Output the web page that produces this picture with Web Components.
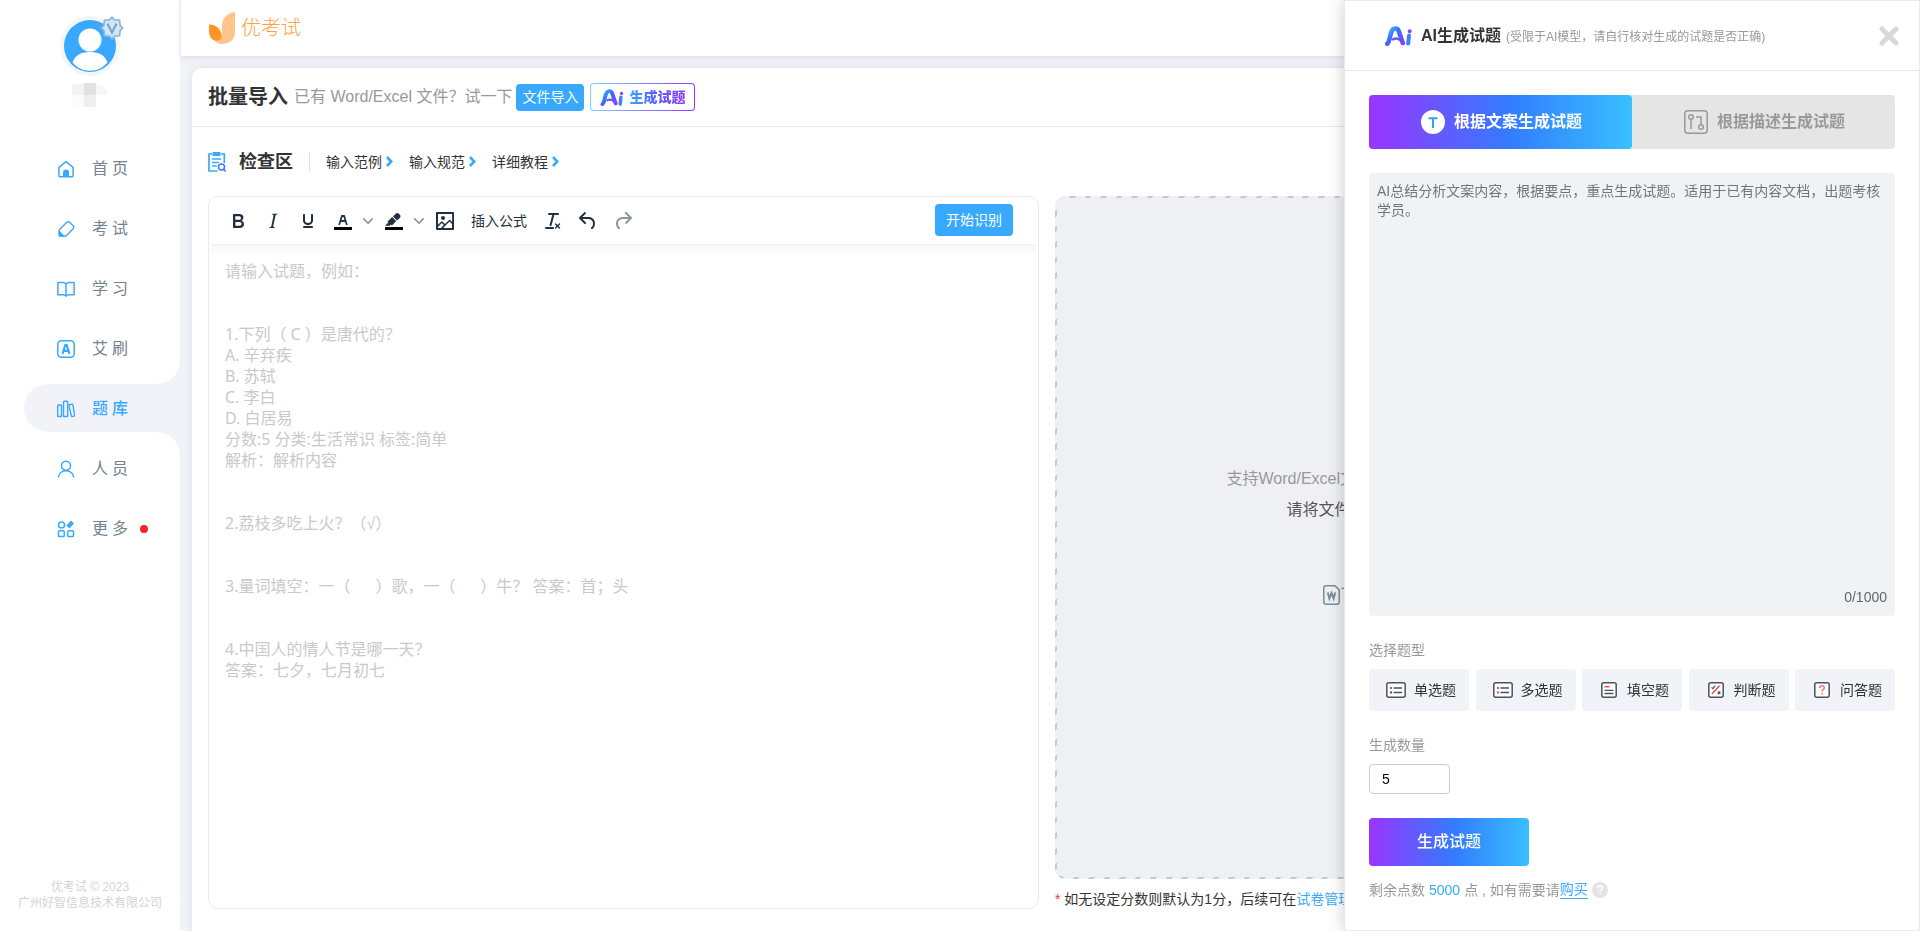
<!DOCTYPE html>
<html lang="zh-CN">
<head>
<meta charset="utf-8">
<title>优考试 - 批量导入</title>
<style>
  html, body { margin: 0; height: 100%; }
  body {
    font: 14px/20px "Liberation Sans", "Noto Sans CJK SC", sans-serif;
    color: #333;
    background: #f2f3f8;
    --blue: #38a9ff;
    --soft: #f2f3f8;
    --ai: linear-gradient(90deg, #9a35ff 0%, #337bff 53%, #38c0ff 100%);
  }
</style>
</head>
<body>
<exam-app></exam-app>

<script>
const BASE = `
  *, *::before, *::after { box-sizing: border-box; }
  button, input, textarea { font: inherit; color: inherit; margin: 0; }
  button { border: 0; background: none; padding: 0; cursor: pointer; }
  a { color: inherit; text-decoration: none; }
  svg { display: block; flex: none; }
  h1, h2, p { margin: 0; }
`;

function define(name, markup, setup) {
  const template = document.createElement('template');
  customElements.define(name, class extends HTMLElement {
    constructor() {
      super();
      template.innerHTML = typeof markup === 'function' ? markup(this) : markup;
      this.attachShadow({ mode: 'open' });
      this.shadowRoot.innerHTML = `<style>${BASE}</style>`;
      this.shadowRoot.append(template.content.cloneNode(true));
      if (setup) setup(this, this.shadowRoot);
    }
  });
}

/* ---------- Icons ---------- */
const NAV_ICONS = {
  home: '<path d="M1.9 7.3 9 1.6l7.1 5.7v8.5a1 1 0 0 1-1 1H2.9a1 1 0 0 1-1-1z" fill="none" stroke="#38a9ff" stroke-width="1.5" stroke-linejoin="round"/><path d="M6 17v-4.500a3 3 0 0 1 6 0V17z" fill="#38a9ff"/>',
  exam: '<rect x="2.500" y="4.500" width="14" height="9" rx="2.400" transform="rotate(-45 9.500 9)" fill="none" stroke="#38a9ff" stroke-width="1.400"/><path d="M1.300 10.500 8.300 17H3.800a2.500 2.500 0 0 1-2.500-2.500z" fill="#38a9ff"/>',
  study: '<path d="M9 4.200c-1-1.300-1.700-1.600-3-1.600H.9v12.200H6c1.300 0 2.200.4 3 1.300.8-.9 1.700-1.300 3-1.300h5.100V2.600H12c-1.300 0-2 .3-3 1.600zM9 4.200v12" fill="none" stroke="#38a9ff" stroke-width="1.500" stroke-linejoin="round"/>',
  app: '<rect x="0.800" y="0.800" width="16.400" height="16.400" rx="3.500" fill="none" stroke="#38a9ff" stroke-width="1.500"/><path d="M5.500 13.800 8.300 5h1.400l2.800 8.800M6.600 10.800h4.800" fill="none" stroke="#38a9ff" stroke-width="2.200"/>',
  bank: '<rect x="0.700" y="5" width="3.800" height="11.500" rx=".8" fill="none" stroke="#38a9ff" stroke-width="1.400"/><rect x="6.500" y="1.300" width="4.200" height="15.200" rx=".8" fill="none" stroke="#38a9ff" stroke-width="1.400"/><path d="m12.300 4.800 2.600-.5a.8.800 0 0 1 1 .7l1.700 10.200a.8.800 0 0 1-.6.900l-1.700.4a.8.800 0 0 1-1-.7L12 5.600z" fill="none" stroke="#38a9ff" stroke-width="1.400"/>',
  people: '<circle cx="9" cy="5.800" r="4.500" fill="none" stroke="#38a9ff" stroke-width="1.500"/><path d="M1.300 17.500C1.700 13.300 5 10.800 9 10.800s7.300 2.500 7.700 6.700" fill="none" stroke="#38a9ff" stroke-width="1.500"/>',
  more: '<g fill="none" stroke="#38a9ff" stroke-width="1.500"><circle cx="4.500" cy="5" r="3"/><rect x="1.500" y="10.800" width="5.800" height="5.800" rx="1.200"/><rect x="10.700" y="10.800" width="5.800" height="5.800" rx="1.200"/></g><path d="m10.900 7 4.600-5" stroke="#38a9ff" stroke-width="4.200" stroke-linecap="butt"/>'
};

const EDIT_ICONS = {
  bold: 'M7.8 19c-.3 0-.5 0-.6-.2l-.2-.5V5.7c0-.2 0-.4.2-.5l.6-.2h5c1.500 0 2.700.3 3.500 1 .7.6 1.100 1.400 1.100 2.500a3 3 0 0 1-.6 1.900c-.4.6-1 1-1.600 1.200.4.1.9.3 1.300.6s.8.7 1 1.200c.4.4.5 1 .5 1.600 0 1.300-.4 2.300-1.300 3-.8.7-2.100 1-3.800 1H7.800Zm5-8.300c.6 0 1.200-.1 1.600-.5.4-.3.6-.7.6-1.300 0-1.100-.8-1.700-2.300-1.700H9.300v3.500h3.400Zm.5 6c.7 0 1.300-.1 1.700-.4.4-.4.6-.9.6-1.500s-.2-1-.7-1.400c-.4-.3-1-.4-2-.4H9.400v3.800h4Z',
  italic: 'm16.700 4.700-.1.9h-.3c-.6 0-1 0-1.400.3-.3.3-.4.6-.5 1.100l-2.100 9.800v.6c0 .5.4.8 1.400.8h.2l-.2.8H8l.2-.8h.2c1.100 0 1.800-.5 2-1.500l2-9.800.1-.5c0-.6-.4-.8-1.400-.8h-.3l.2-.9h5.800Z',
  underline: 'M16 5c.6 0 1 .4 1 1v5.500a4 4 0 0 1-.4 1.800l-1 1.400a5.300 5.300 0 0 1-5.500 1 5 5 0 0 1-1.600-1c-.5-.4-.8-.9-1.100-1.400a4 4 0 0 1-.4-1.800V6c0-.6.4-1 1-1s1 .4 1 1v5.500c0 .3 0 .6.2 1l.6.7a3.300 3.300 0 0 0 2.200.8 3.400 3.400 0 0 0 2.200-.8c.3-.2.4-.5.6-.8l.2-.9V6c0-.6.4-1 1-1ZM8 17h8c.6 0 1 .4 1 1s-.4 1-1 1H8a1 1 0 0 1 0-2Z',
  color: 'M8.700 16h-.8a.5.5 0 0 1-.5-.6l2.700-9c.1-.3.3-.4.5-.4h2.800c.2 0 .4.1.5.4l2.700 9a.5.5 0 0 1-.5.6h-.8a.5.5 0 0 1-.4-.4l-.7-2.200c0-.3-.3-.4-.5-.4h-3.400c-.2 0-.4.1-.5.4l-.7 2.200c0 .3-.2.4-.4.4Zm2.600-7.600-.6 2a.5.5 0 0 0 .5.6h1.600a.5.5 0 0 0 .5-.6l-.6-2c0-.3-.3-.4-.5-.4h-.4c-.2 0-.4.1-.5.4Z',
  mark: 'M7.700 16.700H3l3.300-3.300-.7-.8L10.200 8l4 4.100-4 4.200c-.2.2-.6.2-.8 0l-.6-.7-1.100 1.100zm5-7.500L11 7.400l3-2.900a2 2 0 0 1 2.600 0L18 6c.7.7.7 2 0 2.700l-2.900 2.900-1.800-1.800-.5-.6',
  image: 'm5 15.700 3.300-3.200c.3-.3.7-.3 1 0L12 15l4.100-4c.3-.4.8-.4 1 0l2 1.900V5H5v10.700ZM5 18V19h3l2.800-2.900-2-2L5 17.900Zm14-3-2.500-2.400-6.400 6.500H19v-4ZM4 3h16c.6 0 1 .4 1 1v16c0 .6-.4 1-1 1H4a1 1 0 0 1-1-1V4c0-.6.4-1 1-1Zm6 8a2 2 0 1 0 0-4 2 2 0 0 0 0 4Z',
  clear: 'M13.200 6a1 1 0 0 1 0 .2l-2.600 10a1 1 0 0 1-1 .8h-.2a.8.8 0 0 1-.8-1l2.600-10H8a1 1 0 1 1 0-2h9a1 1 0 0 1 0 2h-3.800ZM5 18h7a1 1 0 0 1 0 2H5a1 1 0 0 1 0-2Zm13 1.500L16.500 18 15 19.500a.7.7 0 0 1-1-1l1.500-1.500-1.500-1.500a.7.7 0 0 1 1-1l1.500 1.500 1.500-1.500a.7.7 0 0 1 1 1L17.500 17l1.500 1.500a.7.7 0 0 1-1 1Z',
  undo: 'M6.400 8H12c3.700 0 6.200 2 6.800 5.100.6 2.700-.4 5.600-2.300 6.800a1 1 0 0 1-1-1.800c1.100-.6 1.800-2.700 1.400-4.600-.5-2.100-2.100-3.500-4.900-3.500H6.400l3.300 3.300a1 1 0 1 1-1.400 1.400l-5-5a1 1 0 0 1 0-1.400l5-5a1 1 0 0 1 1.400 1.400L6.400 8Z',
  redo: 'M17.600 10H12c-2.800 0-4.400 1.400-4.900 3.500-.4 2 .3 4 1.400 4.600a1 1 0 1 1-1 1.800c-2-1.200-2.900-4.100-2.300-6.800.6-3 3-5.100 6.800-5.100h5.600l-3.300-3.300a1 1 0 1 1 1.400-1.400l5 5a1 1 0 0 1 0 1.400l-5 5a1 1 0 0 1-1.400-1.400l3.300-3.300Z'
};

const FRAME = '<rect x="2.800" y="0.800" width="14.400" height="14.400" rx="2" fill="#fff" stroke="#4a5260" stroke-width="1.500"/>';
const WIDE = '<rect x="0.800" y="0.800" width="18.400" height="14.400" rx="2" fill="#fff" stroke="#4a5260" stroke-width="1.500"/><path d="M7.500 6H16M7.500 10.500H16" stroke="#4a5260" stroke-width="1.300"/>';
const TYPE_ICONS = {
  single: WIDE + '<path d="M4 5h2v2H4z" fill="#f34b4b"/><path d="M4 9.500h2v2H4z" fill="#4a5260"/>',
  multi: WIDE + '<path d="M4 5h2v2H4zM4 9.500h2v2H4z" fill="#f34b4b"/>',
  blank: FRAME + '<path d="M5.500 4.700h5" stroke="#f34b4b" stroke-width="1.500"/><path d="M5.500 8.300h9M5.500 11.500h9" stroke="#4a5260" stroke-width="1.300"/>',
  judge: FRAME + '<path d="m6 11.800 7.500-8" stroke="#f34b4b" stroke-width="1.500"/><path d="m5.500 5.300 1.300 1.300 2.400-3M11.800 9.500l2.500 2.500m0-2.500-2.500 2.500" fill="none" stroke="#4a5260" stroke-width="1.200"/>',
  essay: FRAME + '<path d="M7.700 6.200c0-3.400 4.600-3.200 4.600-.4 0 1.700-2.300 1.800-2.300 3.700m0 1.300v1.600" fill="none" stroke="#f46a6a" stroke-width="1.400"/>'
};

/* ---------- Ai mark ---------- */
define('ai-mark', `
  <style>:host { display: block; width: 27px; height: 20px; }</style>
  <svg width="100%" height="100%" viewBox="0 0 27 20" aria-hidden="true">
    <defs><linearGradient id="g" x1="0" y1="0" x2="1" y2="1">
      <stop offset="0" stop-color="#35bdff"/><stop offset=".45" stop-color="#3b6bff"/><stop offset="1" stop-color="#8e3bff"/>
    </linearGradient></defs>
    <g fill="none" stroke-linecap="round">
      <path d="M2.300 17.800C5 15.500 4.500 9 7 4.600 8.500 2 12.300 1.700 13.500 4.600l4.300 12.400" stroke="url(#g)" stroke-width="4.600"/>
      <path d="M8 13.300c2.500-1.200 5-.8 7 .7" stroke="#5a5cff" stroke-width="2.600"/>
      <path d="m24 9.600-.8 8" stroke="#3f80ff" stroke-width="4"/>
      <path d="M24.700 5.200v.1" stroke="#8a3dff" stroke-width="3.800"/>
    </g>
  </svg>`);

/* ---------- Sidebar ---------- */
define('nav-item', host => `
  <style>
    :host { display: block; padding-left: 24px; }
    a { display: flex; align-items: center; height: 48px; padding: 2px 0 0 33px; gap: 17px;
        border-radius: 24px 0 0 24px; font-size: 16px; letter-spacing: 4px; color: #73828c; position: relative; }
    i { width: 8px; height: 8px; border-radius: 50%; background: #ff1f2c; margin-left: -9px; }
    :host([active]) a { background: var(--soft); color: var(--blue); font-weight: 500; }
    :host([active]) a::before, :host([active]) a::after {
      content: ""; position: absolute; right: 0; width: 22px; height: 22px; }
    :host([active]) a::before { bottom: 100%; background: radial-gradient(circle at 0 0, transparent 21px, var(--soft) 22px); }
    :host([active]) a::after { top: 100%; background: radial-gradient(circle at 0 100%, transparent 21px, var(--soft) 22px); }
  </style>
  <a href="#${host.getAttribute('icon')}">
    <svg width="18" height="18" viewBox="0 0 18 18" aria-hidden="true">${NAV_ICONS[host.getAttribute('icon')]}</svg>
    <slot></slot>${host.hasAttribute('dot') ? '<i></i>' : ''}
  </a>`);

define('side-bar', `
  <style>
    :host { display: flex; flex-direction: column; width: 180px; flex: none; background: #fff; }
    .who { display: flex; flex-direction: column; align-items: center; gap: 7px; padding-top: 16px; height: 144px; }
    .face { position: relative; width: 60px; height: 60px; border-radius: 50%; background: #f5f6f9; padding: 4px; }
    .badge { position: absolute; left: 40px; top: 0; }
    nav { display: flex; flex-direction: column; gap: 12px; }
    footer { margin-top: auto; padding-bottom: 20px; text-align: center; font-size: 12px; line-height: 16px; color: #d4d4d4; }
  </style>
  <div class="who">
    <div class="face">
      <svg width="52" height="52" viewBox="0 0 52 52" aria-hidden="true">
        <circle cx="26" cy="26" r="26" fill="#38a9ff"/><circle cx="26" cy="20" r="11.500" fill="#fff"/>
        <path d="M8.500 42.500C11 36 16 32 26 32s15 4 17.500 10.500C38 48.500 33 50.700 26 50.700S14 48.500 8.500 42.500z" fill="#fff"/>
      </svg>
      <svg class="badge" width="24" height="24" viewBox="0 0 24 24" aria-hidden="true">
        <path d="m12 1.200 2.500 2.500 5.100.6.600 5.200L22.900 12l-2.700 2.500-.6 5.200-5.100.6-2.500 2.500-2.500-2.500-5.100-.6-.6-5.200L1.100 12l2.700-2.500.6-5.200 5.100-.6z" fill="#cbe7fb" stroke="#8fb3cc" stroke-width="1.600"/>
        <path d="m7.600 7.800 4.400 8.700 4.400-8.700" fill="none" stroke="#82a3bb" stroke-width="2.200"/>
      </svg>
    </div>
    <svg width="36" height="24" viewBox="0 0 36 24" aria-hidden="true">
      <path d="M0 1h12v11H0z" fill="#f3f2f4"/><path d="M12 0h12v12H12z" fill="#e2e1e1"/><path d="M24 1c7 1 12 4 12 11H24z" fill="#f7f7fa"/>
      <path d="M0 12h12v12H0z" fill="#fbfbfb"/><path d="M12 12h12v12H12z" fill="#eeefef"/>
    </svg>
  </div>
  <nav>
    <nav-item icon="home">首页</nav-item>
    <nav-item icon="exam">考试</nav-item>
    <nav-item icon="study">学习</nav-item>
    <nav-item icon="app">艾刷</nav-item>
    <nav-item icon="bank" active>题库</nav-item>
    <nav-item icon="people">人员</nav-item>
    <nav-item icon="more" dot>更多</nav-item>
  </nav>
  <footer>优考试 © 2023<br>广州好智信息技术有限公司</footer>`);

/* ---------- Top bar ---------- */
define('top-bar', `
  <style>
    :host { display: flex; align-items: center; height: 56px; flex: none; margin-left: 1px; padding-left: 28px; gap: 6px;
      background: #fff; box-shadow: 0 1px 6px rgba(30, 40, 90, .12); font-size: 20px; font-weight: 300; color: #ff9f43; }
  </style>
  <svg width="26" height="32" viewBox="0 0 26 32" aria-hidden="true">
    <path d="M26 0c-8 1-13 6.500-13 14v8c0 4-3 6.500-8 6 2 2.500 5 4 8.500 4C21 32 26 27 26 20z" fill="#ffc58c"/>
    <path d="M0 12.500c8 0 13.500 6 12.700 13.500C10 30.500 0 30 0 19z" fill="#ff9426"/>
  </svg>
  <span>优考试</span>`);

/* ---------- Editor ---------- */
const toolIcon = name => `<svg width="24" height="24" viewBox="0 0 24 24" fill="currentColor" fill-rule="evenodd" aria-hidden="true"><path d="${EDIT_ICONS[name]}"/>${name === 'color' || name === 'mark' ? '<path d="M3 18h18v3H3z" fill="#000"/>' : ''}</svg>`;
const tool = (name, label) => `<button type="button" class="t" aria-label="${label}">${toolIcon(name)}</button>`;
const splitTool = (name, label) => `<span class="s">${tool(name, label)}<button type="button" class="c" aria-label="${label}选项"><svg width="10" height="10" viewBox="0 0 10 10" fill="#8e949d" aria-hidden="true"><path d="M8.700 2.200c.3-.3.8-.3 1 0 .4.4.4.9 0 1.200L5.700 7.800c-.3.3-.9.3-1.200 0L.2 3.400a.8.8 0 0 1 0-1.200c.3-.3.8-.3 1.100 0L5 6l3.700-3.800Z"/></svg></button></span>`;

define('question-editor', `
  <style>
    :host { display: flex; flex-direction: column; min-width: 0; border: 1px solid #ebebeb; border-radius: 10px; }
    .bar { display: flex; align-items: center; gap: 1px; height: 47px; flex: none; padding: 0 25px 0 12px;
      border-radius: 10px; color: #222f3e; }
    .shade { height: 12px; flex: none; margin: 0 2px; background: linear-gradient(#efefef, #f8f8f9 2px, #fff); }
    .t { display: flex; justify-content: center; width: 34px; }
    .s { display: flex; align-items: center; }
    .c { display: flex; justify-content: center; width: 16px; }
    .f { padding: 0 8px; }
    .off { opacity: .5; }
    .go { width: 78px; height: 32px; margin: 0 0 2px auto; border-radius: 4px; background: var(--blue); color: #fff; }
    textarea { flex: 1; display: block; width: 100%; border: 0; outline: 0; resize: none; background: none; padding: 5px 16px;
      font: 16px/21px "Noto Sans", "Liberation Sans", "Noto Sans CJK SC", sans-serif; }
    textarea::placeholder { color: #c9c9c9; opacity: 1; }
  </style>
  <div class="bar" role="toolbar">
    ${tool('bold', '粗体')}${tool('italic', '斜体')}${tool('underline', '下划线')}
    ${splitTool('color', '文字颜色')}${splitTool('mark', '背景颜色')}
    ${tool('image', '图片')}<button type="button" class="f">插入公式</button>
    ${tool('clear', '清除格式')}${tool('undo', '撤销')}
    <button type="button" class="t off" aria-label="重做">${toolIcon('redo')}</button>
    <button type="button" class="go">开始识别</button>
  </div>
  <div class="shade"></div>
  <textarea aria-label="试题" placeholder="请输入试题，例如：


1.下列（ C ）是唐代的？
A. 辛弃疾
B. 苏轼
C. 李白
D. 白居易
分数:5 分类:生活常识 标签:简单
解析：解析内容


2.荔枝多吃上火？（√）


3.量词填空：一（      ）歌，一（      ）牛？ 答案：首；头


4.中国人的情人节是哪一天？
答案：七夕，七月初七"></textarea>`);

/* ---------- Drop zone ---------- */
define('drop-zone', `
  <style>
    :host { display: flex; flex-direction: column; min-width: 0; gap: 10px; }
    .zone { flex: 1; display: flex; flex-direction: column; align-items: center; justify-content: center; padding-bottom: 2px;
      border: 2px solid transparent; border-radius: 10px; font-size: 16px; line-height: 21px; white-space: nowrap; color: #555;
      background: linear-gradient(#eff0f3, #eff0f3) padding-box,
        repeating-linear-gradient(135deg, #c8c9cb 0 4px, #eff0f3 4px 11px) border-box; }
    .a { width: 488px; color: #999; margin-bottom: 10px; }
    .b { width: 368px; }
    .c { width: 296px; display: flex; align-items: center; gap: 1px; margin-top: 64px; color: #73828c; }
    p { overflow: hidden; white-space: nowrap; }
    .star { color: #f33; }
    a { color: var(--blue); }
  </style>
  <div class="zone">
    <div class="a">支持Word/Excel文件</div>
    <div class="b">请将文件</div>
    <a class="c" href="#word"><svg width="17" height="20" viewBox="0 0 17 20" fill="none" stroke="#788c99" stroke-width="1.500" aria-hidden="true"><path d="M12 .8H3A2.200 2.200 0 0 0 .8 3v14A2.200 2.200 0 0 0 3 19.200h11a2.200 2.200 0 0 0 2.200-2.200V5z"/><path d="m4.800 7.500 1.600 6 2.100-5.500 2.100 5.500 1.600-6" stroke-width="2"/></svg>下</a>
  </div>
  <p><span class="star">*</span> 如无设定分数则默认为1分，后续可在<a href="#paper">试卷管理</a></p>`);

/* ---------- Import card ---------- */
define('help-link', `
  <style>
    :host { display: block; }
    a { display: flex; align-items: center; gap: 4px; }
  </style>
  <a href="#help"><slot></slot><svg width="7" height="11" viewBox="0 0 7 11" fill="none" stroke="#38a9ff" stroke-width="2.600" aria-hidden="true"><path d="m1 1 4.200 4.500L1 10"/></svg></a>`);

define('import-card', `
  <style>
    :host { display: flex; flex-direction: column; flex: 1; min-height: 0; margin: 12px 18px 0 12px; background: #fff;
      border-radius: 10px 10px 0 0; box-shadow: 0 0 8px rgba(30, 40, 90, .1); }
    header { display: flex; align-items: center; height: 59px; flex: none; padding: 0 16px; border-bottom: 1px solid #e6e6e6; }
    h1 { font-size: 20px; line-height: 28px; }
    header p { margin: 0 4px 0 6px; font-size: 16px; color: #999; }
    .file { height: 27px; padding: 0 6px; border-radius: 4px; background: var(--blue); color: #fff; }
    .ai { display: flex; align-items: center; gap: 5px; height: 28px; margin-left: 6px; padding: 0 9px; border: 1px solid transparent; border-radius: 4px;
      background: linear-gradient(#fff, #fff) padding-box, linear-gradient(90deg, #7fd0ff, #9a35ff) border-box; font-weight: 900; }
    .ai ai-mark { width: 24px; height: 17px; }
    .ai span { background: linear-gradient(90deg, #35a9ff, #5a5cff 50%, #8e3bff); background-clip: text; color: transparent; }
    .head { display: flex; align-items: center; height: 69px; flex: none; padding: 0 16px; }
    h2 { margin: 0 16px 0 13px; font-size: 18px; line-height: 24px; }
    .links { display: flex; gap: 16px; padding-left: 16px; height: 20px; border-left: 1px solid #e2e2e2; }
    .cols { flex: 1; display: grid; grid-template-columns: 1fr 1fr; gap: 16px; min-height: 0; padding: 0 16px 22px; }
  </style>
  <header>
    <h1>批量导入</h1>
    <p>已有 Word/Excel 文件？试一下</p>
    <button type="button" class="file">文件导入</button>
    <button type="button" class="ai"><ai-mark></ai-mark><span>生成试题</span></button>
  </header>
  <div class="head">
    <svg width="18" height="20" viewBox="0 0 18 20" fill="none" aria-hidden="true">
      <path d="M4 2H1v17h8.500M13 2h3.300v9" stroke="#38a9ff" stroke-width="1.700"/><path d="M4.500 0h8v4h-8z" fill="#38a9ff"/>
      <path d="M4 7h9M4 10.500h7M4 14h5" stroke="#38a9ff" stroke-width="1.500"/>
      <circle cx="13.500" cy="15" r="3" stroke="#3f74ff" stroke-width="1.500"/><path d="m15.600 17.200 2 2.200" stroke="#3f74ff" stroke-width="1.500"/>
    </svg>
    <h2>检查区</h2>
    <div class="links"><help-link>输入范例</help-link><help-link>输入规范</help-link><help-link>详细教程</help-link></div>
  </div>
  <div class="cols"><question-editor></question-editor><drop-zone></drop-zone></div>`);

/* ---------- AI drawer ---------- */
define('type-chip', host => `
  <style>
    :host { display: block; width: 100px; }
    button { display: flex; align-items: center; gap: 8px; width: 100%; height: 42px; padding-left: 17px; border-radius: 4px; background: var(--soft); white-space: nowrap; }
  </style>
  <button type="button"><svg width="20" height="16" viewBox="0 0 20 16" aria-hidden="true">${TYPE_ICONS[host.getAttribute('kind')]}</svg><slot></slot></button>`);

define('ai-drawer', `
  <style>
    :host { position: fixed; inset: 0 0 0 auto; width: 30%; display: flex; flex-direction: column; background: #fff;
      border: 1px solid #e6eaf0; box-shadow: 0 0 16px rgba(0, 0, 0, .2); }
    header { display: flex; align-items: center; height: 70px; flex: none; padding: 0 20px 0 40px; border-bottom: 1px solid #e6e6e6; }
    header h2 { margin: 0 5px 0 9px; font-size: 16px; line-height: 24px; font-weight: 700; }
    header small { font-size: 12px; color: #999; white-space: nowrap; padding-top: 2px; }
    header button { margin-left: auto; }
    .body { flex: 1; display: flex; flex-direction: column; min-height: 0; padding: 24px 24px 31px; }
    .tabs { display: grid; grid-template-columns: 1fr 1fr; height: 54px; flex: none; border-radius: 4px; background: #e5e5e5; }
    .tabs button { display: flex; align-items: center; justify-content: center; gap: 9px; padding-left: 2px; border-radius: 4px; font-size: 16px; font-weight: 700; color: #999; }
    .tabs .on { background: var(--ai); color: #fff; }
    .text { flex: 1; display: flex; flex-direction: column; margin: 24px 0; padding: 9px 8px; border-radius: 4px; background: #f1f2f4; min-height: 0; }
    textarea { flex: 1; width: 100%; padding: 0; border: 0; outline: 0; resize: none; background: none; line-height: 19px; }
    textarea::placeholder { color: #757575; opacity: 1; }
    output { align-self: flex-end; color: #666; }
    .label { color: #999; margin-bottom: 9px; }
    .kinds { display: flex; justify-content: space-between; margin-bottom: 24px; }
    input { width: 81px; height: 30px; padding: 0 12px; border: 1px solid #ccc; border-radius: 4px; color: #000; outline: 0; margin-bottom: 24px; }
    .make { width: 160px; height: 48px; flex: none; border-radius: 4px; background: var(--ai); color: #fff; font-size: 16px; font-weight: 500; margin-bottom: 14px; }
    .rest { display: flex; align-items: center; color: #999; line-height: 18px; }
    .rest b { font-weight: 400; color: var(--blue); margin: 0 4px; }
    .rest a { color: var(--blue); border-bottom: 1px solid var(--blue); }
    .rest svg { margin-left: 4px; }
  </style>
  <header>
    <ai-mark></ai-mark><h2>AI生成试题</h2><small>(受限于AI模型，请自行核对生成的试题是否正确)</small>
    <button type="button" aria-label="关闭"><svg width="20" height="20" viewBox="0 0 20 20" stroke="#d8d8d8" stroke-width="5" stroke-linecap="round" aria-hidden="true"><path d="m3 3 14 14M17 3 3 17"/></svg></button>
  </header>
  <div class="body">
    <div class="tabs">
      <button type="button" class="on"><svg width="24" height="24" viewBox="0 0 24 24" aria-hidden="true"><circle cx="12" cy="12" r="12" fill="#fff"/><path d="M7.500 8.200h9M12 8.200V18" stroke="#389dff" stroke-width="2"/></svg>根据文案生成试题</button>
      <button type="button"><svg width="24" height="24" viewBox="0 0 24 24" fill="none" stroke="#999" stroke-width="1.500" aria-hidden="true"><rect x=".8" y=".8" width="22.400" height="22.400" rx="3"/><circle cx="7" cy="7" r="2.300"/><circle cx="17" cy="17" r="2.300"/><path d="M7 9.300V19M12 7h5v7.700"/></svg>根据描述生成试题</button>
    </div>
    <div class="text">
      <textarea aria-label="文案" placeholder="AI总结分析文案内容，根据要点，重点生成试题。适用于已有内容文档，出题考核学员。"></textarea>
      <output>0/1000</output>
    </div>
    <div class="label">选择题型</div>
    <div class="kinds">
      <type-chip kind="single">单选题</type-chip><type-chip kind="multi">多选题</type-chip><type-chip kind="blank">填空题</type-chip><type-chip kind="judge">判断题</type-chip><type-chip kind="essay">问答题</type-chip>
    </div>
    <label class="label" for="count">生成数量</label>
    <input id="count" type="text" value="5">
    <button type="button" class="make">生成试题</button>
    <div class="rest">剩余点数<b>5000</b>点 , 如有需要请<a href="#buy">购买</a>
      <svg width="16" height="16" viewBox="0 0 16 16" aria-hidden="true"><circle cx="8" cy="8" r="8" fill="#e3e3e3"/><path d="M5.700 6.200c0-3.200 4.700-3 4.700-.3 0 1.700-2.300 1.800-2.300 3.500m0 1.400v1.500" fill="none" stroke="#fff" stroke-width="1.500"/></svg>
    </div>
  </div>`);

/* ---------- App ---------- */
define('exam-app', `
  <style>
    :host { display: flex; height: 100vh; min-height: 720px; overflow: hidden; }
    main { flex: 1; display: flex; flex-direction: column; min-width: 0; }
  </style>
  <side-bar></side-bar>
  <main><top-bar></top-bar><import-card></import-card></main>
  <ai-drawer></ai-drawer>`);
</script>
</body>
</html>
